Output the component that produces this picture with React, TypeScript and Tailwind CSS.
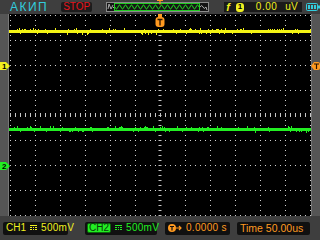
import React, { useMemo } from "react";

function rng(seed: number) {
  let s = seed;
  return () => {
    s = (s * 1103515245 + 12345) & 0x7fffffff;
    return s / 0x7fffffff;
  };
}

function tracePath(yTop: number, h: number, seed: number, w: number) {
  const r = rng(seed);
  let d = `M0 ${yTop}h${w}v${h}h-${w}z`;
  for (let x = 0; x < w; x++) {
    const v = r();
    if (v < 0.12) d += `M${x} ${yTop - 1}h1v1h-1z`;
    else if (v < 0.2) d += `M${x} ${yTop + h}h1v1h-1z`;
    else if (v < 0.23) d += `M${x} ${yTop - 2}h1v2h-1z`;
    else if (v < 0.25) d += `M${x} ${yTop + h}h1v2h-1z`;
  }
  return d;
}

function Grid() {
  const W = 302;
  const H = 202;
  const yellow = useMemo(() => tracePath(16, 3, 7, W), []);
  const green = useMemo(() => tracePath(114, 3, 19, W), []);
  const vx: number[] = [];
  for (let k = 0; k <= 12; k++) if (k !== 6) vx.push(1 + 25 * k);
  const hy: number[] = [];
  for (let k = 0; k <= 8; k++) if (k !== 4) hy.push(1 + 25 * k);
  return (
    <svg width={W} height={H} className="block">
      <g stroke="#cfcfcf" strokeWidth={1} strokeDasharray="1 4">
        {vx.map((x) => (
          <line key={"v" + x} x1={x + 0.5} y1={1} x2={x + 0.5} y2={H} />
        ))}
        {hy.map((y) => (
          <line key={"h" + y} x1={1} y1={y + 0.5} x2={W} y2={y + 0.5} />
        ))}
      </g>
      <g stroke="#c8c8c8" strokeDasharray="1 4">
        <line x1={1} y1={101} x2={W} y2={101} strokeWidth={4} />
        <line x1={151} y1={1} x2={151} y2={H} strokeWidth={3} />
      </g>
      <path d={yellow} fill="#f4f414" />
      <path d={green} fill="#22ee22" />
    </svg>
  );
}

function DC({ color }: { color: string }) {
  return (
    <svg width="7" height="6" className="block">
      <rect x="0" y="0" width="7" height="1" fill={color} />
      <rect x="0" y="2" width="2" height="1" fill={color} />
      <rect x="3" y="2" width="1" height="1" fill={color} />
      <rect x="5" y="2" width="2" height="1" fill={color} />
      <rect x="0" y="4" width="2" height="1" fill={color} />
      <rect x="3" y="4" width="1" height="1" fill={color} />
      <rect x="5" y="4" width="2" height="1" fill={color} />
    </svg>
  );
}

export default function App() {
  const sine = useMemo(() => {
    let d = "M0 4";
    for (let x = 0; x <= 84; x += 0.5) {
      d += `L${x} ${4 + 2 * Math.sin((x / 6) * Math.PI * 2)}`;
    }
    return d;
  }, []);
  return (
    <div className="relative w-[320px] h-[240px] overflow-hidden bg-[#3e3e3e] flex flex-col font-['Liberation_Sans',sans-serif]">
      {/* top bar */}
      <div className="h-[14px] flex items-center relative">
        <div className="ml-[10px] text-[12px] leading-none tracking-[1.5px] text-[#33ccdd]">АКИП</div>
        <div className="ml-[13px] w-[31px] h-[10px] rounded-[2px] bg-[#1c1c1c] flex items-center justify-center text-[10px] leading-none text-[#e8141c]">
          STOP
        </div>
        <div className="ml-[14px] w-[103px] h-[10px] bg-[#141414] border border-[#8a8a8a] flex items-center">
          <svg width="101" height="8" className="block">
            <path d="M1 6L2 1L4 6L6 2" stroke="#aaa" fill="none" strokeWidth={1} />
            <line x1="6" y1="4.5" x2="8" y2="4.5" stroke="#aaa" />
            <rect x="7.5" y="0.5" width="85" height="7" fill="none" stroke="#22cc22" />
            <g transform="translate(8,0)">
              <path d={sine} stroke="#22dd22" fill="none" strokeWidth={1} />
            </g>
            <path d="M93 4Q95 1 96 4T99 4L100 7" stroke="#aaa" fill="none" />
          </svg>
        </div>
        <div className="ml-[15px] w-[78px] h-[10px] bg-[#1a1a1a] flex items-center text-[#f0f020] text-[10px] leading-none">
          <span className="ml-[2px] italic font-bold text-[11px]">f</span>
          <span className="ml-[6px] w-[8px] h-[9px] rounded-[3px] bg-[#f0f020] text-black text-[8px] font-bold flex items-center justify-center">1</span>
          <span className="ml-[12px] tracking-[0.5px]">0.00</span>
          <span className="ml-[8px]">uV</span>
        </div>
        <svg width="14" height="8" className="ml-[4px] block">
          <rect x="0.5" y="0.5" width="11" height="7" fill="none" stroke="#33ccdd" rx="1" />
          <rect x="12" y="2.5" width="2" height="3" fill="#33ccdd" />
          <rect x="2" y="2" width="2" height="4" fill="#33ccdd" />
          <rect x="5" y="2" width="2" height="4" fill="#33ccdd" />
          <rect x="8" y="2" width="2" height="4" fill="#33ccdd" />
        </svg>
      </div>

      {/* middle */}
      <div className="h-[202px] flex">
        <div className="w-[9px] bg-[#555555] border-r border-[#777]" />
        <div className="w-[302px] bg-black">
          <Grid />
        </div>
        <div className="w-[9px] bg-[#555555] border-l border-[#777]" />
      </div>

      {/* bottom */}
      <div className="flex-1 flex items-center text-[10px] leading-none">
        <div className="ml-[3px] w-[65px] h-[13px] rounded-[2px] bg-[#101010] flex items-center text-[#f0f020]">
          <span className="ml-[3px]">CH1</span>
          <span className="ml-[4px]"><DC color="#f0f020" /></span>
          <span className="ml-[4px] tracking-[0.3px]">500mV</span>
        </div>
        <div className="ml-[17px] w-[72px] h-[13px] rounded-[2px] bg-[#101010] flex items-center text-[#22ee22]">
          <span className="ml-[2px] h-[10px] px-[1px] rounded-[2px] bg-[#22ee22] border border-[#0a6a0a] text-[#0a3a0a] flex items-center">CH2</span>
          <span className="ml-[4px]"><DC color="#22ee22" /></span>
          <span className="ml-[4px] tracking-[0.3px]">500mV</span>
        </div>
        <div className="ml-[8px] w-[65px] h-[13px] rounded-[2px] bg-[#101010] flex items-center text-[#ff9a20]">
          <svg width="15" height="8" className="ml-[3px] block">
            <circle cx="4" cy="4" r="4" fill="#ff9a20" />
            <path d="M2 2.5h4M4 2.5v4" stroke="#101010" strokeWidth="1.2" />
            <path d="M8 4h5M11 2l2 2l-2 2" stroke="#ff9a20" fill="none" strokeWidth="1.2" />
          </svg>
          <span className="ml-[3px] tracking-[0.3px]">0.0000</span>
          <span className="ml-[3px]">s</span>
        </div>
        <div className="ml-[7px] w-[73px] h-[13px] rounded-[2px] bg-[#101010] flex items-center text-[#ff9a20]">
          <span className="ml-[3px] text-[10.5px]">Time 50.00us</span>
        </div>
      </div>

      {/* overlays: markers */}
      <svg width="8" height="5" className="absolute left-[157px] top-0 block">
        <path d="M0 0.5h6M3 0.5v4" stroke="#ff9a20" strokeWidth="1.2" />
      </svg>
      <svg width="10" height="14" className="absolute left-[155px] top-[14px] block">
        <rect x="3" y="0" width="4" height="4" fill="#ff9a20" />
        <rect x="0.5" y="3" width="9" height="10" rx="3" fill="#ff9a20" />
        <path d="M2.5 5.5h5M5 5.5v6" stroke="#2a1400" strokeWidth="1.3" />
      </svg>
      <svg width="10" height="8" className="absolute left-0 top-[62px] block">
        <path d="M0 0h6l4 4l-4 4h-6z" fill="#f0f020" />
        <text x="2" y="7" fontSize="8" fontFamily="Liberation Sans" fontWeight="bold" fill="#000">1</text>
      </svg>
      <svg width="10" height="8" className="absolute left-0 top-[162px] block">
        <path d="M0 0h6l4 4l-4 4h-6z" fill="#22ee22" />
        <text x="2" y="7" fontSize="8" fontFamily="Liberation Sans" fontWeight="bold" fill="#000">2</text>
      </svg>
      <svg width="9" height="8" className="absolute left-[311px] top-[62px] block">
        <path d="M0 4l3 -4h4a2 2 0 0 1 2 2v4a2 2 0 0 1 -2 2h-4z" fill="#ff9a20" />
        <path d="M3 2h5M5.5 2v5" stroke="#2a1400" strokeWidth="1.2" />
      </svg>
    </div>
  );
}
